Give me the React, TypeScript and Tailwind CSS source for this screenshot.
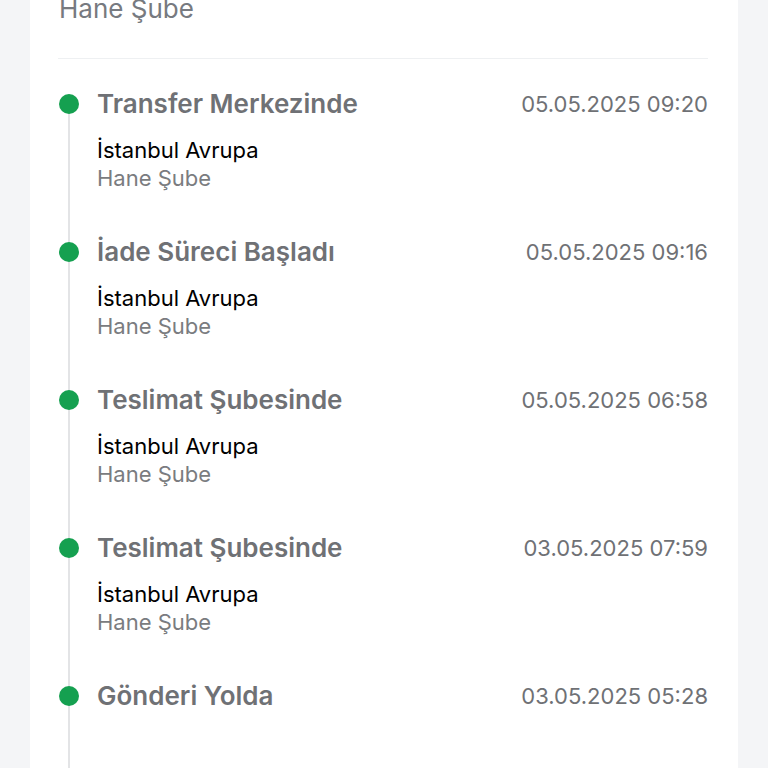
const events = [
  { title: "Transfer Merkezinde", date: "05.05.2025 09:20", city: "İstanbul Avrupa", branch: "Hane Şube" },
  { title: "İade Süreci Başladı", date: "05.05.2025 09:16", city: "İstanbul Avrupa", branch: "Hane Şube" },
  { title: "Teslimat Şubesinde", date: "05.05.2025 06:58", city: "İstanbul Avrupa", branch: "Hane Şube" },
  { title: "Teslimat Şubesinde", date: "03.05.2025 07:59", city: "İstanbul Avrupa", branch: "Hane Şube" },
  { title: "Gönderi Yolda", date: "03.05.2025 05:28" },
];

export default function App() {
  return (
    <div className="h-[768px] overflow-hidden bg-[#f4f5f7] font-['Inter',sans-serif]">
      <div className="mx-[30px] flex h-full flex-col bg-white pl-[28px] pr-[30px]">
        {/* Previous block tail */}
        <p className="-mt-[9px] ml-[1px] text-[26px] leading-[36px] text-[#777a80]">Hane Şube</p>

        <div className="mt-[31px] h-px shrink-0 bg-[#eef0f2]" />

        {/* Timeline */}
        <div className="relative flex-1 pt-[29px]">
          <div className="absolute left-[10px] top-[49px] bottom-0 w-[2px] bg-[#e3e4e6]" />

          {events.map((e, i) => (
            <div key={i} className="relative flex gap-[18px] pb-[44px]">
              <div className="flex h-[32px] w-[21px] shrink-0 items-center pl-[1px]">
                <div className="h-[20px] w-[20px] rounded-full bg-[#15a050]" />
              </div>
              <div className="flex-1">
                <div className="flex items-center justify-between">
                  <h3 className="text-[26px] font-semibold leading-[32px] text-[#6f7175]">{e.title}</h3>
                  <span className="text-[22px] leading-[32px] text-[#6f7175]">{e.date}</span>
                </div>
                {e.city && (
                  <>
                    <p className="mt-[16px] text-[22px] leading-[28px] text-black">{e.city}</p>
                    <p className="text-[22px] leading-[28px] text-[#7a7c80]">{e.branch}</p>
                  </>
                )}
              </div>
            </div>
          ))}
        </div>
      </div>
    </div>
  );
}
